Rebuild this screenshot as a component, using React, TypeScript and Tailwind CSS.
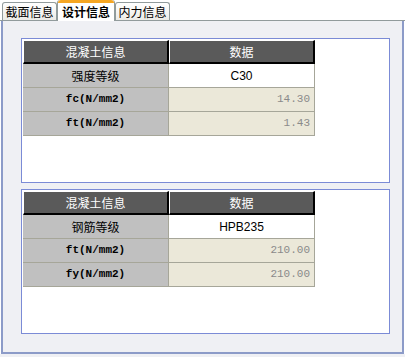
const cjk = "font-['SimSun','Noto_Sans_CJK_SC',sans-serif]";
const mono = "font-['Liberation_Mono','Noto_Sans_CJK_SC',monospace]";

type Row = { label: string; value: string; editable?: boolean; mono?: boolean };

const concrete: Row[] = [
  { label: "强度等级", value: "C30", editable: true },
  { label: "fc(N/mm2)", value: "14.30", mono: true },
  { label: "ft(N/mm2)", value: "1.43", mono: true },
];

const rebar: Row[] = [
  { label: "钢筋等级", value: "HPB235", editable: true },
  { label: "ft(N/mm2)", value: "210.00", mono: true },
  { label: "fy(N/mm2)", value: "210.00", mono: true },
];

function Tab({ label, active }: { label: string; active?: boolean }) {
  if (active) {
    return (
      <div className="relative -mb-px flex h-[21px] w-[58px] items-center justify-center rounded-t-[3px] border-x border-[#919b9c] bg-white text-[12px] font-bold text-black">
        <div className="absolute inset-x-0 top-0 h-[3px] rounded-t-[3px] bg-[#f5a623]" />
        <span className={`${cjk} mt-[3px]`}>{label}</span>
      </div>
    );
  }
  return (
    <div className="flex h-[18px] w-[55px] items-center justify-center rounded-t-[3px] border-x border-t border-[#919b9c] bg-gradient-to-b from-white to-[#ecebe6] text-[12px] text-black">
      <span className={`${cjk} mt-[1px]`}>{label}</span>
    </div>
  );
}

function InfoTable({ rows }: { rows: Row[] }) {
  return (
    <div className="w-[292px]">
      <div className="flex h-[24px]">
        {["混凝土信息", "数据"].map((h) => (
          <div
            key={h}
            className={`${cjk} flex w-[146px] items-center justify-center border-t border-l border-white border-r-2 border-b-2 border-r-black border-b-black bg-[#5a5a5a] text-[12px] text-white`}
          >
            {h}
          </div>
        ))}
      </div>
      {rows.map((r) => (
        <div key={r.label} className="flex h-[24px] border-b border-[#a6a699]">
          <div
            className={`${r.mono ? mono + " text-[11px] font-bold" : cjk + " text-[12px]"} flex w-[146px] items-center justify-center border-r border-[#a6a699] bg-[#c0c0c0] text-black`}
          >
            {r.label}
          </div>
          {r.editable ? (
            <div className="flex w-[146px] items-center justify-center border-r border-[#a6a699] bg-white font-['Liberation_Sans',sans-serif] text-[12px] text-black">
              {r.value}
            </div>
          ) : (
            <div className={`${mono} flex w-[146px] items-center justify-end border-r border-[#a6a699] bg-[#ebe8d9] pr-[4px] text-[11px] text-[#8a8a8a]`}>
              {r.value}
            </div>
          )}
        </div>
      ))}
    </div>
  );
}

function GroupBox({ rows }: { rows: Row[] }) {
  return (
    <div className="h-[145px] w-[369px] border border-[#7b8bd6] bg-white p-px">
      <InfoTable rows={rows} />
    </div>
  );
}

export default function App() {
  return (
    <div className="h-[357px] w-[405px] overflow-hidden bg-white">
      <div className="flex h-[21px] items-end border-b border-[#919b9c] pl-[2px]">
        <Tab label="截面信息" />
        <Tab label="设计信息" active />
        <Tab label="内力信息" />
      </div>
      <div className="ml-px flex h-[333px] w-[403px] flex-col gap-[6px] border-x-2 border-b-2 border-[#8c9bc8] bg-[#eff0f4] pt-[17px] pl-[18px]">
        <GroupBox rows={concrete} />
        <GroupBox rows={rebar} />
      </div>
      <div className="h-[3px] bg-[#eff0f4]" />
    </div>
  );
}
